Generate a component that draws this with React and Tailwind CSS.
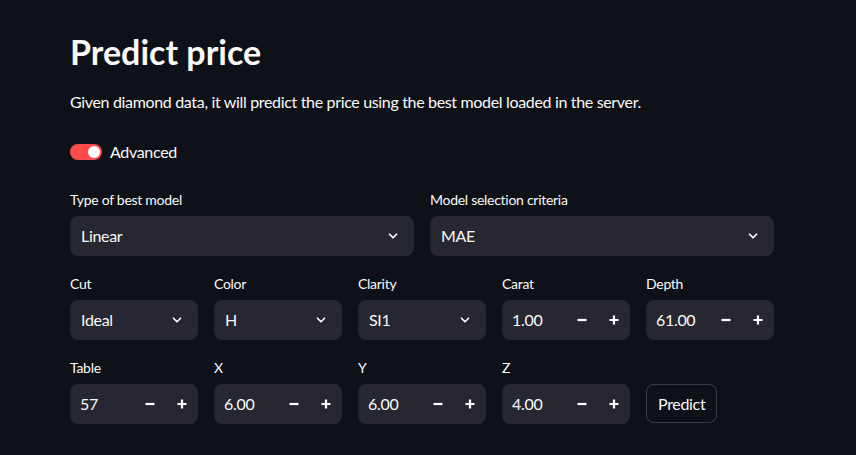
import React, { useState } from 'react';

const FONT = { fontFamily: '"Lato", "Noto Sans", sans-serif' };

const Chevron = () => (
  <svg width="14" height="14" viewBox="0 0 24 24" fill="none" stroke="currentColor" strokeWidth="3" strokeLinecap="round" strokeLinejoin="round">
    <path d="M6 9l6 6 6-6" />
  </svg>
);

const Minus = () => (
  <svg width="12" height="12" viewBox="0 0 12 12" fill="none" stroke="currentColor" strokeWidth="2.2">
    <path d="M1.5 6h9" />
  </svg>
);

const Plus = () => (
  <svg width="12" height="12" viewBox="0 0 12 12" fill="none" stroke="currentColor" strokeWidth="2.2">
    <path d="M1.5 6h9M6 1.5v9" />
  </svg>
);

const Field = ({ label, children }) => (
  <div className="flex flex-col min-w-0">
    <label className="text-[14px] leading-[16px] mb-[8px] tracking-[-0.02em] text-[#fafafa]">{label}</label>
    {children}
  </div>
);

const Select = ({ label, value }) => (
  <Field label={label}>
    <div className="h-[40px] rounded-[8px] bg-[#262730] flex items-center justify-between pl-[11px] pr-[14px] text-[16px] tracking-[-0.02em]">
      <span>{value}</span>
      <Chevron />
    </div>
  </Field>
);

const NumberInput = ({ label, value }) => (
  <Field label={label}>
    <div className="h-[40px] rounded-[8px] bg-[#262730] flex items-center text-[16px] tracking-[-0.02em]">
      <span className="flex-1 pl-[10px] text-[#fafafa]">{value}</span>
      <button className="w-[32px] h-full flex items-center justify-center text-white"><Minus /></button>
      <button className="w-[32px] h-full flex items-center justify-center text-white"><Plus /></button>
    </div>
  </Field>
);

export default function App() {
  const [advanced, setAdvanced] = useState(true);
  return (
    <div className="w-[856px] h-[455px] bg-[#0e1117] text-[#fafafa] overflow-hidden" style={FONT}>
      <div className="w-[704px] ml-[70px] pt-[30px]">
        <h1 className="text-[34px] leading-[44px] font-bold">Predict price</h1>
        <p className="mt-[16px] text-[16px] leading-[24px] tracking-[-0.021em]">
          Given diamond data, it will predict the price using the best model loaded in the server.
        </p>
        <div className="mt-[26px] flex items-center gap-[8px] h-[24px]">
          <button
            onClick={() => setAdvanced(!advanced)}
            className="w-[32px] h-[16px] rounded-full bg-[#ff4b4b] flex items-center justify-end px-[2px]"
          >
            <span className="w-[12px] h-[12px] rounded-full bg-white" />
          </button>
          <span className="text-[16px] tracking-[-0.02em]">Advanced</span>
        </div>
        <div className="mt-[28px] grid grid-cols-2 gap-[16px]">
          <Select label="Type of best model" value="Linear" />
          <Select label="Model selection criteria" value="MAE" />
        </div>
        <div className="mt-[20px] grid grid-cols-5 gap-[16px]">
          <Select label="Cut" value="Ideal" />
          <Select label="Color" value="H" />
          <Select label="Clarity" value="SI1" />
          <NumberInput label="Carat" value="1.00" />
          <NumberInput label="Depth" value="61.00" />
        </div>
        <div className="mt-[20px] grid grid-cols-5 gap-[16px]">
          <NumberInput label="Table" value="57" />
          <NumberInput label="X" value="6.00" />
          <NumberInput label="Y" value="6.00" />
          <NumberInput label="Z" value="4.00" />
          <div className="flex items-end">
            <button className="h-[39px] mb-[1px] px-[11px] rounded-[8px] border border-[rgba(250,250,250,0.2)] text-[16px] tracking-[-0.02em]">
              Predict
            </button>
          </div>
        </div>
      </div>
    </div>
  );
}
